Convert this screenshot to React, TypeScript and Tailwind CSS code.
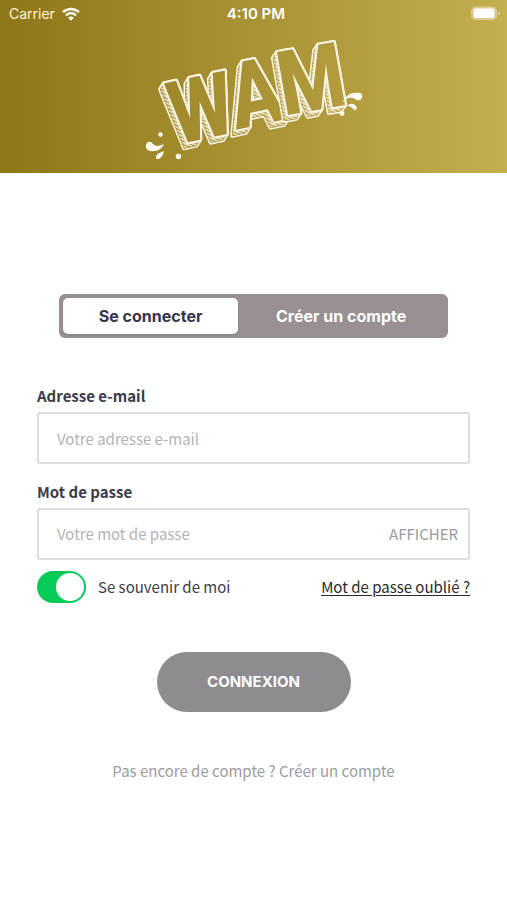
import { useState } from "react";
import clsx from "clsx";

const DEPTH = [0, 1, 2, 3, 4, 5];

const LETTERS = [
  { char: "W", x: 176, y: 147, size: 88, angle: -12 },
  { char: "A", x: 236, y: 132, size: 92, angle: -12 },
  { char: "M", x: 284, y: 118, size: 90, angle: -10 },
];

function LogoLetter({ char, x, y, size, angle }: (typeof LETTERS)[number]) {
  return (
    <g transform={`translate(${x} ${y}) rotate(${angle})`} fontSize={size} paintOrder="stroke">
      {DEPTH.map((d) => (
        <text key={d} x={-d} y={d} fill="white" stroke="white" strokeWidth="4">
          {char}
        </text>
      ))}
      {DEPTH.map((d) => (
        <text key={d} x={-d} y={d} fill="black" stroke="black" strokeWidth="1">
          {char}
        </text>
      ))}
      {DEPTH.map((d) => (
        <text key={d} x={-d} y={d} fill="url(#hatch)">
          {char}
        </text>
      ))}
      <text fill="black" stroke="white" strokeWidth="4">
        {char}
      </text>
    </g>
  );
}

function Logo() {
  return (
    <svg
      viewBox="140 30 230 136"
      className="h-[136px] w-[230px]"
      role="img"
      aria-label="WAM"
    >
      <defs>
        <pattern
          id="hatch"
          width="3"
          height="3"
          patternUnits="userSpaceOnUse"
          patternTransform="rotate(35)"
        >
          <rect width="3" height="1.500" fill="#ccc" />
        </pattern>
        <mask id="lettering" maskUnits="userSpaceOnUse" x="140" y="30" width="230" height="136">
          <g
            fontFamily="'Liberation Sans Narrow', 'Roboto Condensed', 'Liberation Sans', sans-serif"
            fontWeight="700"
            strokeLinejoin="round"
          >
            {LETTERS.map((letter) => (
              <LogoLetter key={letter.char} {...letter} />
            ))}
          </g>
        </mask>
      </defs>
      <rect x="140" y="30" width="230" height="136" fill="#fbf6e6" mask="url(#lettering)" />
      <g fill="#fffdf6">
        <path d="M147 147c1-4 5-4 7-1 3 3 7 2 11 0-2 4-5 7-10 7-5 1-9-2-8-6Z" />
        <path d="M157 160c0-4 3-5 8-7-1 4-3 8-6 8-1 0-2 0-2-1Z" />
        <circle cx="161.500" cy="136.500" r="2.200" />
        <circle cx="179.500" cy="158.500" r="2.700" />
        <path d="M343 105c4-8 9-11 18-10 3 1 3 5 0 7-3 1-4-1-7-2-5-1-8 1-11 5Z" />
        <path d="M348 108c3-3 6-3 9 0 2 2 0 5-2 4-2-3-4-4-7-4Z" />
        <circle cx="343" cy="115.500" r="2.400" />
      </g>
    </svg>
  );
}

function StatusBar() {
  return (
    <div className="grid h-7 grid-cols-3 items-center pr-1 pl-[9px] font-['Inter',sans-serif] text-sm leading-5 text-white">
      <div className="flex items-center gap-[7px] text-[#fbf6dc]">
        <span>Carrier</span>
        <svg viewBox="0 0 18 14" className="h-[14px] w-[18px] text-white" aria-hidden="true">
          <g fill="none" stroke="currentColor" strokeWidth="2.400">
            <path d="M1 5.200c4.500-4.300 11.500-4.300 16 0" />
            <path d="M4 8.300c2.900-2.700 7.100-2.700 10 0" />
          </g>
          <path d="M6.200 10.700c1.700-1.500 3.900-1.500 5.600 0L9 13.700Z" fill="currentColor" />
        </svg>
      </div>
      <span className="text-center text-[15px] leading-5 font-semibold">4:10 PM</span>
      <svg viewBox="0 0 32 16" className="h-4 w-8 justify-self-end" aria-hidden="true">
        <rect x="0.500" y="1" width="25" height="12.500" rx="4" fill="#d6c98c" stroke="#dccf98" />
        <rect x="2.500" y="2.500" width="21" height="9.500" rx="2" fill="white" />
        <path d="M27.500 5.500c2 .7 2 3.300 0 4Z" fill="#e2d8a6" />
      </svg>
    </div>
  );
}

const TABS = ["Se connecter", "Créer un compte"];

export default function App() {
  const [tab, setTab] = useState(TABS[0]);
  const [showPassword, setShowPassword] = useState(false);

  return (
    <div className="min-h-screen bg-white font-['Noto_Sans_CJK_SC',sans-serif] text-[15px] leading-6 text-[#3b3c4a]">
      <header className="bg-linear-to-r from-[#8e7716] to-[#c4af4f] pb-[9px]">
        <StatusBar />
        <div className="flex justify-center">
          <Logo />
        </div>
      </header>

      <main className="px-[37px] pt-[121px]">
        <div className="mx-[22px] flex h-11 rounded-md bg-[#989093] p-1 font-['Inter',sans-serif] text-base">
          {TABS.map((name, i) => (
            <button
              key={name}
              type="button"
              onClick={() => setTab(name)}
              className={clsx(
                "rounded-[5px] font-bold",
                i === 0 ? "basis-[46%]" : "flex-1",
                tab === name ? "bg-white text-[#33364a] shadow" : "text-white",
              )}
            >
              {name}
            </button>
          ))}
        </div>

        <form onSubmit={(e) => e.preventDefault()} className="pt-[46px]">
          <label htmlFor="email" className="block font-bold">
            Adresse e-mail
          </label>
          <input
            id="email"
            type="email"
            placeholder="Votre adresse e-mail"
            className="mt-1 block h-[52px] w-full rounded-[3px] border-2 border-[#dcdcdc] px-[18px] placeholder:text-[#b3b3b3]"
          />

          <label htmlFor="password" className="mt-4 block font-bold">
            Mot de passe
          </label>
          <div className="mt-1 flex h-[52px] rounded-[3px] border-2 border-[#dcdcdc]">
            <input
              id="password"
              type={showPassword ? "text" : "password"}
              placeholder="Votre mot de passe"
              className="min-w-0 flex-1 px-[18px] placeholder:text-[#b3b3b3]"
            />
            <button
              type="button"
              onClick={() => setShowPassword(!showPassword)}
              className="px-[10px] text-[#9b9b9b]"
            >
              AFFICHER
            </button>
          </div>

          <div className="mt-[11px] flex h-8 items-center justify-between">
            <label className="flex items-center gap-3">
              <input
                type="checkbox"
                role="switch"
                defaultChecked
                className="flex h-8 w-[49px] appearance-none items-center rounded-full bg-gray-300 p-[2px] before:size-7 before:rounded-full before:bg-white checked:justify-end checked:bg-[#04cb57]"
              />
              <span>Se souvenir de moi</span>
            </label>
            <a href="#" className="text-[#2b2b2b] underline underline-offset-2">
              Mot de passe oublié ?
            </a>
          </div>

          <button
            type="submit"
            className="mx-auto mt-[49px] block h-[60px] w-[194px] rounded-full bg-[#8f8c8f] font-['Inter',sans-serif] text-[15px] font-bold text-white"
          >
            CONNEXION
          </button>
        </form>

        <p className="py-[47px] text-center text-[#9b9ba2]">
          Pas encore de compte ? <a href="#">Créer un compte</a>
        </p>
      </main>
    </div>
  );
}
